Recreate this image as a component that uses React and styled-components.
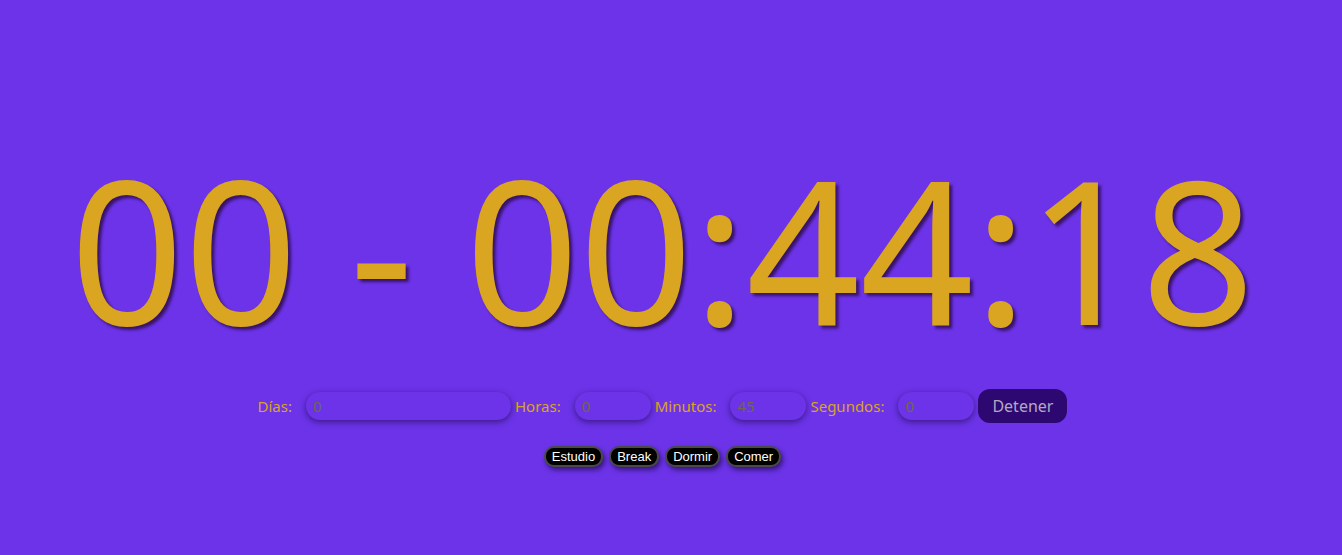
import React, { useState } from 'react';
import styled, { createGlobalStyle } from 'styled-components';

const GlobalStyle = createGlobalStyle`
	html, body {
		margin: 0;
		padding: 0;
		background: #6c33e9;
	}
	body {
		font-family: 'Noto Sans', 'Open Sans', sans-serif;
	}
`;

const fields = [
	{ label: 'Días:', value: '0', wide: true },
	{ label: 'Horas:', value: '0' },
	{ label: 'Minutos:', value: '45' },
	{ label: 'Segundos:', value: '0' },
];

const presets = ['Estudio', 'Break', 'Dormir', 'Comer'];

const App = () => {
	const [values, setValues] = useState(fields.map((f) => f.value));
	const handleChange = (i) => (e) => {
		const next = [...values];
		next[i] = e.target.value;
		setValues(next);
	};
	return (
		<Page>
			<GlobalStyle />
			<Clock>00 - 00:44:18</Clock>
			<Controls>
				{fields.map((f, i) => (
					<Field key={f.label}>
						<Label>{f.label}</Label>
						<Input $wide={f.wide} value={values[i]} onChange={handleChange(i)} />
					</Field>
				))}
				<Stop>Detener</Stop>
			</Controls>
			<Presets>
				{presets.map((p) => (
					<Preset key={p}>{p}</Preset>
				))}
			</Presets>
		</Page>
	);
};

const Page = styled.div`
	display: flex;
	flex-direction: column;
	align-items: center;
	height: 555px;
	padding: 148px 17px 0 0;
	box-sizing: border-box;
	background: #6c33e9;
`;
const Clock = styled.div`
	font-family: 'Noto Sans', sans-serif;
	font-size: 199px;
	line-height: 1;
	color: #daa520;
	text-shadow: 3px 3px 3px rgba(40, 10, 60, 0.75);
	white-space: nowrap;
`;
const Controls = styled.div`
	display: flex;
	align-items: center;
	margin-top: 42px;
`;
const Field = styled.label`
	display: flex;
	align-items: center;
	margin-right: 4px;
`;
const Label = styled.span`
	font-family: 'Noto Sans', sans-serif;
	font-size: 15px;
	color: #daa520;
	margin-right: 14px;
`;
const Input = styled.input`
	width: ${(props) => (props.$wide ? '205px' : '76px')};
	height: 28px;
	box-sizing: border-box;
	border: none;
	outline: none;
	border-radius: 14px;
	padding: 0 7px;
	background: #6c33e9;
	color: #6e6a45;
	font-family: 'Noto Sans', sans-serif;
	font-size: 15px;
	box-shadow: 0 2px 6px rgba(20, 0, 50, 0.55);
`;
const Stop = styled.button`
	height: 34px;
	padding: 0 14px;
	border: none;
	border-radius: 12px;
	background: #2d0870;
	color: #b3a8c4;
	font-family: 'Noto Sans', sans-serif;
	font-size: 16px;
	cursor: pointer;
`;
const Presets = styled.div`
	display: flex;
	gap: 6px;
	margin-top: 23px;
`;
const Preset = styled.button`
	height: 21px;
	padding: 0 6px;
	border: 2px solid #4a4a4a;
	border-radius: 10px;
	background: #000;
	color: #fff;
	font-family: 'Liberation Sans', Arial, sans-serif;
	font-size: 13px;
	line-height: 1;
	box-shadow: 2px 3px 5px rgba(20, 0, 50, 0.6);
	cursor: pointer;
`;

export default App;
